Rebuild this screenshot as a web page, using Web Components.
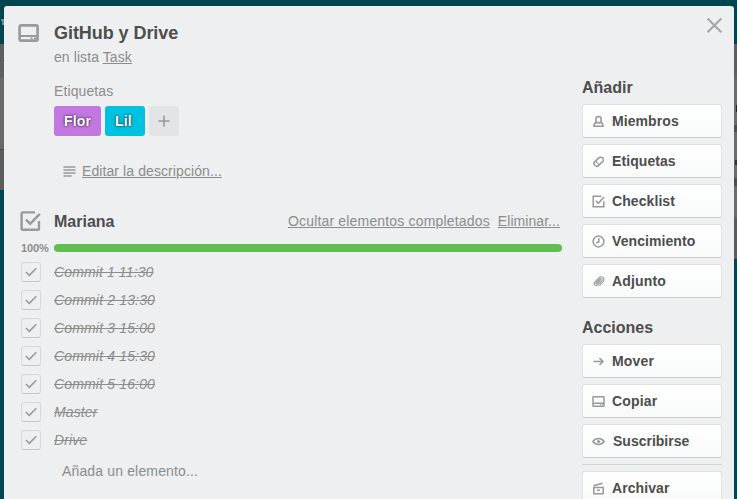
<!DOCTYPE html>
<html lang="es">
<head>
<meta charset="utf-8">
<title>GitHub y Drive</title>
<style>
html,body{margin:0;height:100%;overflow:hidden}
body{font:14px/20px "Liberation Sans",Arial,sans-serif;color:#8c8c8c;background:#004651}
</style>
</head>
<body>
<board-backdrop>
<card-window>
  <close-button slot="close"></close-button>
  <card-title slot="main" list="Task" style="--ls:-.06px">GitHub y Drive</card-title>
  <label-list slot="main" heading="Etiquetas">
    <card-label style="--c:#c377e0;--w:47px;--ls:.2px">Flor</card-label>
    <card-label style="--c:#00c2e0;--w:40px;--ls:.2px">Lil</card-label>
  </label-list>
  <edit-description slot="main" style="--ls:.09px">Editar la descripción...</edit-description>
  <check-list slot="main" heading="Mariana" percent="100%">
    <check-item>Commit 1 11:30</check-item>
    <check-item style="--ls:.16px">Commit 2 13:30</check-item>
    <check-item style="--ls:.16px">Commit 3 15:00</check-item>
    <check-item style="--ls:.16px">Commit 4 15:30</check-item>
    <check-item style="--ls:.16px">Commit 5 16:00</check-item>
    <check-item>Master</check-item>
    <check-item>Drive</check-item>
  </check-list>
  <side-group slot="side" heading="Añadir">
    <side-button icon="member">Miembros</side-button>
    <side-button icon="tag">Etiquetas</side-button>
    <side-button icon="check">Checklist</side-button>
    <side-button icon="clock">Vencimiento</side-button>
    <side-button icon="clip" style="--ls:.15px">Adjunto</side-button>
  </side-group>
  <side-group slot="side" heading="Acciones">
    <side-button icon="move" style="--ls:.15px">Mover</side-button>
    <side-button icon="card" style="--ls:.15px">Copiar</side-button>
    <side-button icon="eye" style="--ls:0px;--in:1px">Suscribirse</side-button>
    <side-divider></side-divider>
    <side-button icon="archive">Archivar</side-button>
  </side-group>
</card-window>
</board-backdrop>
<script>
const define = (name, html) => customElements.define(name, class extends HTMLElement {
  constructor() {
    super();
    const t = document.createElement('template');
    t.innerHTML = typeof html === 'function' ? html(this) : html;
    this.attachShadow({mode: 'open'}).append(t.content.cloneNode(true));
  }
});

const icons = {
  member: '<path d="M4.3 7.2C2.6 8 1.9 9.1 1.9 11.2H11.1C11.1 9.1 10.4 8 8.7 7.2"/><rect x="3.9" y="1.5" width="5.2" height="6.4" rx="2.5"/>',
  tag: '<path d="M2 7.6 7 2.6Q7.7 2 8.6 2.2L10.4 2.6Q11 2.8 11.1 3.5L11.3 5.2Q11.4 5.9 10.8 6.5L6 11.1Q5 12 4 11L2 9.2Q1.4 8.4 2 7.6Z"/><path stroke-width="1.1" d="M3.6 6.2 7.2 9.8"/>',
  check: '<path d="M9.4 1.2H1.2V11.8H11.8V6.3M3.8 5.7 6.3 8.3 12 2"/>',
  clock: '<circle cx="6.5" cy="6.5" r="5.4"/><path d="M6.8 3V6.7L4.2 8"/>',
  clip: '<path stroke-width="1.1" d="M8.7 4.7 5 8.6C4.3 9.3 3.5 8.4 4.2 7.6L7.6 4.1C9.1 2.6 10.9 4.3 9.6 5.9L6 9.8C3.9 12 .9 9.4 2.8 7.1L6.8 2.9C9.6.2 13.4 3.2 11.3 6.4L7.5 10.6"/>',
  move: '<path d="M1.5 6.5H11M7.5 3 11 6.5 7.5 10"/>',
  card: '<rect x="1" y="1.7" width="11" height="9.6" rx=".6"/><path d="M1 8.2H12M8 9.8H8.8M10 9.8H10.8"/>',
  eye: '<path d="M.9 6.5C3.8 2.5 9.2 2.5 12.1 6.5C9.2 10.5 3.8 10.5.9 6.5Z"/><circle cx="6.5" cy="6.5" r=".8"/>',
  archive: '<path d="M1.8 5.6H11.2V11.8H1.8ZM1.5 3.8 10.7 1.3M5 8.2H8"/>'
};

define('board-backdrop', `<style>
:host{display:grid;grid-template-columns:4px 730px 3px;height:499px;overflow:hidden}
.l{background:linear-gradient(#6a8d92,#6a8d92) 1px 19px/3px 2px no-repeat,linear-gradient(#6a8d92,#6a8d92) 2px 21px/2px 4px no-repeat,linear-gradient(#444,#444) 0 60px/1px 1px no-repeat,linear-gradient(#444,#444) 3px 60px/1px 1px no-repeat,
linear-gradient(#004651 44px,#5f5f5f 44px 78px,#6b6967 78px 149px,#494949 149px 150px,#5c5c5c 150px 190px,#004651 190px)}
.r{background:linear-gradient(#222,#222) 2px 105px/1px 7px no-repeat,linear-gradient(#333,#333) 1px 160px/2px 5px no-repeat,
linear-gradient(#004651 44px,#5f6060 44px 78px,#6b6b6b 78px 125px,#4d5051 125px 132px,#6b6b6b 132px 178px,#4d5051 178px 186px,#6b6b6b 186px 218px,#5b5c5c 218px 259px,#004651 259px)}
.m{padding-top:6px}
</style><div class="l"></div><div class="m"><slot></slot></div><div class="r"></div>`);

define('card-window', `<style>
:host{display:flex;justify-content:space-between;height:493px;box-sizing:border-box;padding:15px 12px 0 14px;background:#edeff0;border-radius:3px 3px 0 0;overflow:hidden}
main{width:544px;display:flex;flex-direction:column}
aside{width:140px;position:relative;padding-top:55px}
::slotted([slot=close]){position:absolute;right:-1px;top:-4px}
</style><main><slot name="main"></slot></main><aside><slot name="close"></slot><slot name="side"></slot></aside>`);

define('close-button', `<style>:host{display:block}svg{display:block}</style>
<svg width="17" height="17" fill="none" stroke="#a6a7a8" stroke-width="2.2"><path d="M1.5 1.5 15.3 15.3M15.3 1.5 1.5 15.3"/></svg>`);

define('card-title', el => `<style>
:host{display:grid;grid-template-columns:36px 1fr}
svg{display:block;margin-top:3px}
h1{font-size:18px;line-height:24px;margin:0;color:#4d4d4d;letter-spacing:var(--ls,0)}
p{margin:2px 0 0;letter-spacing:.08px}
</style><svg width="21" height="18" fill="none" stroke="#999" stroke-width="2.6"><rect x="1.6" y="1.4" width="18" height="15.2" rx="1.4"/><path stroke-width="2" d="M1 11.9H20"/><path stroke-width="1.7" d="M12.6 14.4H14.5M16 14.4H18.5"/></svg>
<div><h1><slot></slot></h1><p>en lista <u>${el.getAttribute('list')}</u></p></div>`);

define('label-list', el => `<style>
:host{display:block;padding:14px 0 0 36px}
p{margin:0;letter-spacing:.1px}
div{display:flex;gap:4px;margin-top:5px}
span{width:30px;height:30px;border-radius:3px;background:#e2e4e6;display:grid;place-items:center}
</style><p>${el.getAttribute('heading')}</p><div><slot></slot><span><svg width="12" height="12" stroke="#999" stroke-width="1.6"><path d="M.5 6H11.5M6 .5V11.5"/></svg></span></div>`);

define('card-label', `<style>
:host{display:block;width:var(--w);height:30px;box-sizing:border-box;padding-left:10px;border-radius:3px;background:var(--c);color:#fff;font-weight:bold;line-height:30px;letter-spacing:var(--ls);text-shadow:0 0 5px rgba(0,0,0,.2),0 0 2px #000}
</style><slot></slot>`);

define('edit-description', `<style>
:host{display:flex;align-items:center;gap:6px;padding:25px 0 0 45px}
u{letter-spacing:var(--ls,0)}
</style><svg width="13" height="11" stroke="#999" stroke-width="1.7"><path d="M.5 1H12.5M.5 4H12.5M.5 7H12.5M.5 10H8.5"/></svg><u><slot></slot></u>`);

define('check-list', el => `<style>
:host{display:block;padding-top:28px}
header{display:flex;height:24px;padding-left:1px}
h2{flex:none;margin:0;font-size:16px;line-height:26px;color:#4d4d4d;width:234px;padding-left:13px}
header svg{flex:none;margin-top:1px}
u{line-height:24px;margin-right:8px;white-space:nowrap;letter-spacing:.17px}
u+u{letter-spacing:.06px;margin-right:0}
.p{display:flex;align-items:center;height:8px;padding-top:11px;font-size:11px;font-weight:bold;padding-left:3px}
.p span{width:33px;letter-spacing:-.1px}
.p i{width:508px;height:8px;border-radius:4px;background:#61bd4f}
section{padding-top:6px}
.a{padding:7px 0 0 44px;letter-spacing:.15px}
</style><header><svg width="22" height="22" fill="none" stroke="#999" stroke-width="2.4"><path d="M16 2.4H3.7Q2.6 2.4 2.6 3.5V18.7Q2.6 19.8 3.7 19.8H18.9Q20 19.8 20 18.7V11M7 9.6 11.2 13.8 20.8 3.8"/></svg><h2>${el.getAttribute('heading')}</h2><u>Ocultar elementos completados</u><u>Eliminar...</u></header>
<div class="p"><span>${el.getAttribute('percent')}</span><i></i></div>
<section><slot></slot></section><div class="a">Añada un elemento...</div>`);

define('check-item', `<style>
:host{display:flex;align-items:center;height:28px;padding-left:3px;font-style:italic;gap:13px}
b{width:20px;height:20px;box-sizing:border-box;border:1px solid #d6d8d9;border-bottom-color:#c4c6c7;border-radius:3px;display:grid;place-items:center}
s{letter-spacing:var(--ls,.12px)}
</style><b><svg width="12" height="10" fill="none" stroke="#999" stroke-width="1.6"><path d="M.8 5 4.3 8.4 11.3 1.2"/></svg></b><s><slot></slot></s>`);

define('side-group', el => `<style>
:host{display:block;margin-bottom:18px}
h3{font-size:16px;line-height:24px;margin:0 0 4px;color:#4d4d4d}
div{display:flex;flex-direction:column;gap:6px}
</style><h3>${el.getAttribute('heading')}</h3><div><slot></slot></div>`);

define('side-button', el => `<style>
:host{display:flex;align-items:center;height:34px;box-sizing:border-box;padding-left:9px;gap:6px;border:1px solid #e0e2e3;border-bottom-color:#ced0d1;border-radius:3px;background:linear-gradient(#fff,#f8f9f9);color:#4d4d4d;font-weight:bold}
span{letter-spacing:var(--ls,.08px);padding-left:var(--in,0)}
</style><svg width="14" height="13" fill="none" stroke="#999" stroke-width="1.5">${icons[el.getAttribute('icon')]}</svg><span><slot></slot></span>`);

define('side-divider', `<style>:host{display:block;height:1px;background:#d3d6d8}</style>`);
</script>
</body>
</html>
